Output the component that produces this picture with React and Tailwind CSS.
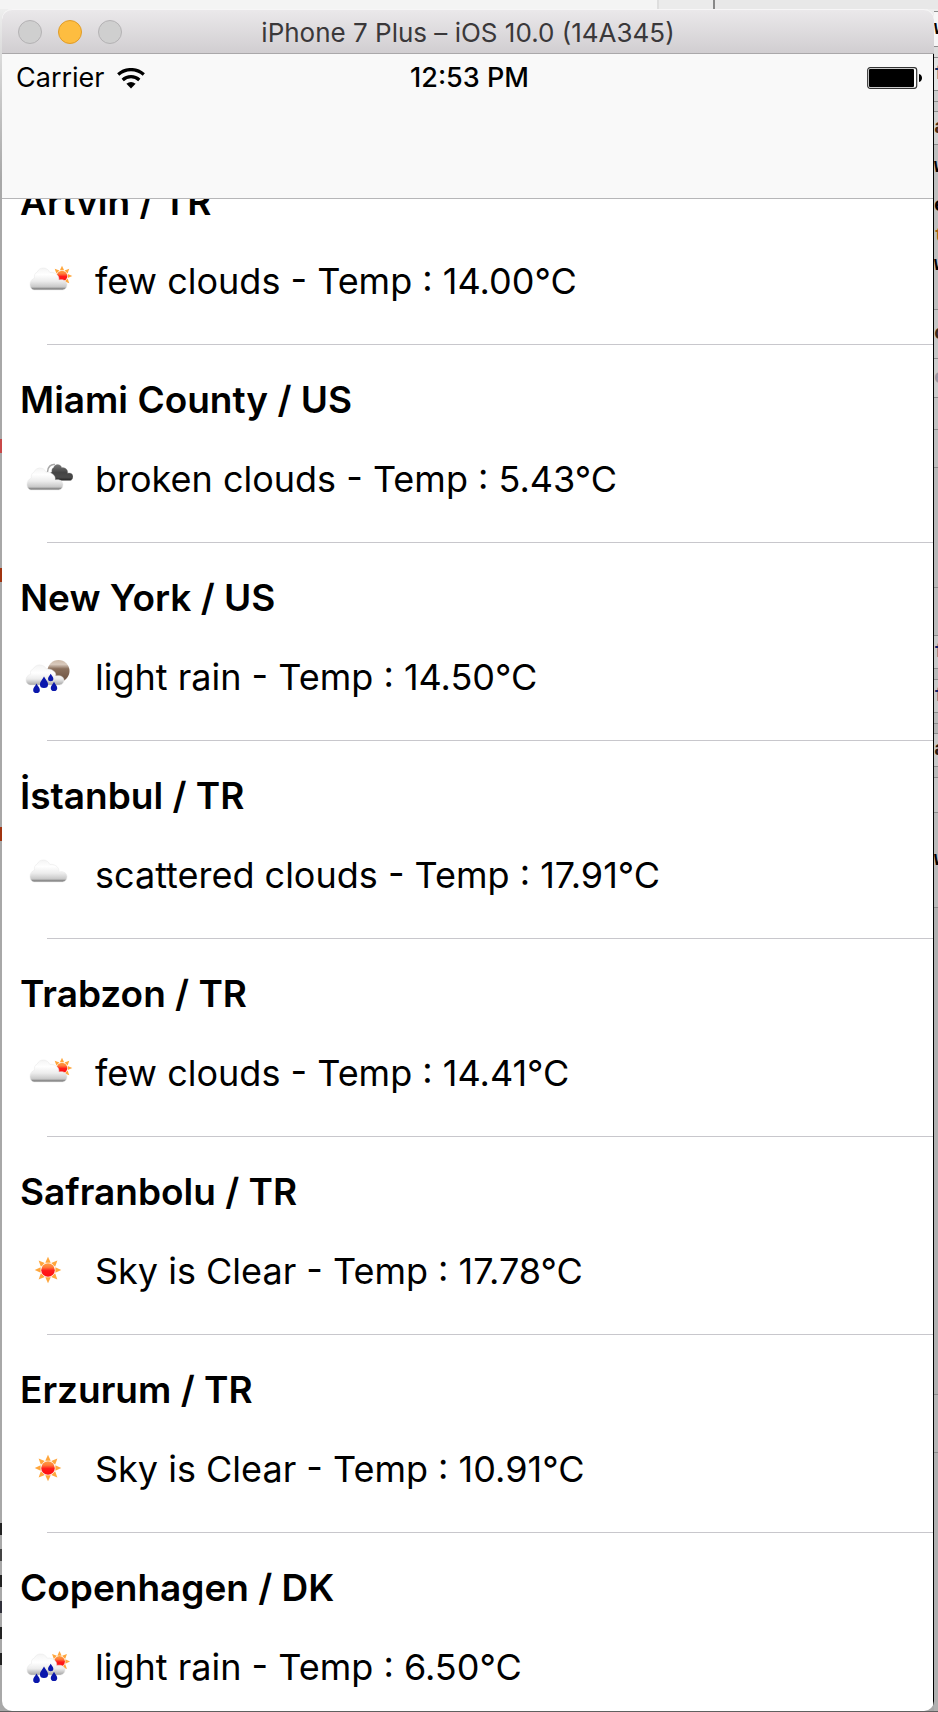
import React from "react";

const cities = [
  { name: "Artvin / TR", detail: "few clouds - Temp : 14.00°C", icon: "few" },
  { name: "Miami County / US", detail: "broken clouds - Temp : 5.43°C", icon: "broken" },
  { name: "New York / US", detail: "light rain - Temp : 14.50°C", icon: "rainNight" },
  { name: "İstanbul / TR", detail: "scattered clouds - Temp : 17.91°C", icon: "cloud" },
  { name: "Trabzon / TR", detail: "few clouds - Temp : 14.41°C", icon: "few" },
  { name: "Safranbolu / TR", detail: "Sky is Clear - Temp : 17.78°C", icon: "sun" },
  { name: "Erzurum / TR", detail: "Sky is Clear - Temp : 10.91°C", icon: "sun" },
  { name: "Copenhagen / DK", detail: "light rain - Temp : 6.50°C", icon: "rainDay" },
];

const rays = [0, 45, 90, 135, 180, 225, 270, 315];

function Gradients() {
  return (
    <svg width="0" height="0" className="absolute" aria-hidden="true">
      <defs>
        <linearGradient id="sunCore" x1="0" y1="0" x2="0" y2="1">
          <stop offset="0" stopColor="#ffa040" />
          <stop offset="0.3" stopColor="#ff7a38" />
          <stop offset="0.55" stopColor="#ff1a1a" />
          <stop offset="1" stopColor="#ff1010" />
        </linearGradient>
        <linearGradient id="cloudFill" x1="0" y1="0" x2="0" y2="1">
          <stop offset="0" stopColor="#f4f4f4" />
          <stop offset="0.3" stopColor="#ffffff" />
          <stop offset="0.6" stopColor="#ececec" />
          <stop offset="0.86" stopColor="#c8c8c8" />
          <stop offset="0.95" stopColor="#808080" />
          <stop offset="1" stopColor="#a0a0a0" />
        </linearGradient>
        <linearGradient id="rainCloud" x1="0" y1="0" x2="0" y2="1">
          <stop offset="0" stopColor="#f4f4f4" />
          <stop offset="0.4" stopColor="#ffffff" />
          <stop offset="0.7" stopColor="#ececec" />
          <stop offset="1" stopColor="#a4a4a4" />
        </linearGradient>
        <linearGradient id="darkCloud" x1="0" y1="0" x2="0" y2="1">
          <stop offset="0" stopColor="#777777" />
          <stop offset="0.5" stopColor="#444444" />
          <stop offset="0.8" stopColor="#4a4a4a" />
          <stop offset="1" stopColor="#222222" />
        </linearGradient>
        <linearGradient id="moonFill" x1="0" y1="0" x2="0" y2="1">
          <stop offset="0" stopColor="#cdb9a8" />
          <stop offset="0.2" stopColor="#d9cabd" />
          <stop offset="0.4" stopColor="#8a6f5c" />
          <stop offset="1" stopColor="#6b5140" />
        </linearGradient>
      </defs>
    </svg>
  );
}

function Sun({ cx, cy, r }) {
  return (
    <g>
      {rays.map((a) => (
        <path
          key={a}
          d={`M${cx - r * 0.4} ${cy - r * 1.08} L${cx} ${cy - r * 1.95} L${cx + r * 0.4} ${cy - r * 1.08} Z`}
          fill="#ffa63c"
          transform={`rotate(${a} ${cx} ${cy})`}
        />
      ))}
      <circle cx={cx} cy={cy} r={r} fill="url(#sunCore)" />
    </g>
  );
}

const cloudPath =
  "M4.500 22 C1.800 22 0 19.400 0 16.500 C0 13.500 1.800 10.900 4.500 10.200 C4 7.500 4.800 5 7 4.300 C8.200 1.600 10.600 0 13.200 0 C16.200 0 18.600 1.700 19.800 4.400 C23 3.800 27 5.600 28.300 8.300 C29 9.800 29 11 28.800 12 C34 10.800 37 13.400 37 16.600 C37 19.900 34.700 22 32.500 22 Z";

function Cloud({ x, y, w = 37, h = 22, fill = "url(#cloudFill)", stroke = "#e6e6e6" }) {
  return (
    <path
      d={cloudPath}
      transform={`translate(${x} ${y}) scale(${w / 37} ${h / 22})`}
      fill={fill}
      stroke={stroke}
      strokeWidth="0.5"
    />
  );
}

function Drop({ x, y, s = 1 }) {
  return (
    <path
      d="M0 -5.500 C1.200 -2.800 3.700 -1 3.700 1.600 A3.700 3.500 0 0 1 -3.700 1.600 C-3.700 -1 -1.200 -2.800 0 -5.500 Z"
      transform={`translate(${x} ${y}) scale(${s})`}
      fill="#0a17ac"
    />
  );
}

function Rain() {
  return (
    <g>
      <Drop x={13.5} y={37.5} s={0.9} />
      <Drop x={21} y={31.5} s={1.1} />
      <Drop x={27.7} y={26.6} s={0.72} />
      <Drop x={31} y={35.6} s={0.88} />
    </g>
  );
}

function WeatherIcon({ kind }) {
  return (
    <svg viewBox="0 0 50 50" className="size-[50px] shrink-0" aria-hidden="true">
      {kind === "sun" && <Sun cx={25} cy={25} r={6.8} />}
      {kind === "few" && (
        <>
          <Sun cx={39} cy={21} r={5.3} />
          <Cloud x={7} y={13} />
        </>
      )}
      {kind === "broken" && (
        <>
          <path d="M24.500 19 C24.500 14 28 10.800 32 11.500" fill="none" stroke="#a8a8a8" strokeWidth="1.500" />
          <Cloud x={26} y={11.5} w={24} h={16} fill="url(#darkCloud)" stroke="#8a8a8a" />
          <Cloud x={4} y={15} w={36} />
        </>
      )}
      {kind === "cloud" && <Cloud x={7} y={11} />}
      {kind === "rainNight" && (
        <>
          <circle cx="35.500" cy="20" r="11" fill="url(#moonFill)" />
          <Cloud x={3} y={14} w={38} h={20} fill="url(#rainCloud)" />
          <Rain />
        </>
      )}
      {kind === "rainDay" && (
        <>
          <Sun cx={36.5} cy={20.5} r={5.4} />
          <Cloud x={4} y={13} w={38} h={21} fill="url(#rainCloud)" />
          <Rain />
        </>
      )}
    </svg>
  );
}

function TitleBar() {
  return (
    <header className="relative flex h-[45px] items-center justify-center rounded-t-[10px] border-b border-[#aaa8aa] bg-linear-to-b from-[#ebe9eb] to-[#d1ced1] pt-1 shadow-[inset_0_1px_0_#f7f6f7]">
      <div className="absolute top-[11px] left-4 flex gap-4">
        <button aria-label="Close" className="size-6 rounded-full border border-[#b4b2b4] bg-[#cfcfcf]" />
        <button aria-label="Minimize" className="size-6 rounded-full border border-[#e09c28] bg-[#fdbd40]" />
        <button aria-label="Zoom" className="size-6 rounded-full border border-[#b4b2b4] bg-[#cfcfcf]" />
      </div>
      <h1 className="text-[26px] leading-8 text-[#3a383a]">iPhone 7 Plus – iOS 10.0 (14A345)</h1>
    </header>
  );
}

function StatusBar() {
  return (
    <div className="grid h-12 grid-cols-3 items-center pl-[14px] pr-[10px] text-[27px] leading-8">
      <div className="flex items-center gap-3">
        <span>Carrier</span>
        <svg viewBox="0 0 28 21" className="h-[21px] w-7" aria-hidden="true">
          <path d="M1.200 6.500 A19 19 0 0 1 26.800 6.500" fill="none" stroke="#000" strokeWidth="3.200" />
          <path d="M5.700 12 A12 12 0 0 1 22.300 12" fill="none" stroke="#000" strokeWidth="3.200" />
          <path d="M14 20.500 L9.400 15.800 Q14 12 18.600 15.800 Z" />
        </svg>
      </div>
      <span className="text-center font-medium">12:53 PM</span>
      <svg viewBox="0 0 56 22" className="h-[22px] w-14 justify-self-end" aria-hidden="true">
        <rect x="0.700" y="0.700" width="49" height="20.600" rx="2.500" fill="#fff" stroke="#333" strokeWidth="1.200" />
        <rect x="2" y="2" width="45" height="18" rx="1" />
        <path d="M52 7 C56 8 56 14 52 15 Z" />
      </svg>
    </div>
  );
}

function CityRow({ city }) {
  return (
    <li className="flex h-[198px] flex-col pt-8 leading-[46px]">
      <h2 className="pl-[18px] text-[37px] font-semibold">{city.name}</h2>
      <div className="mt-[30px] flex items-center gap-[22px] pl-[21px]">
        <WeatherIcon kind={city.icon} />
        <p className="pt-[2px] text-[36px]">{city.detail}</p>
      </div>
      <div className="mt-auto ml-[45px] h-px bg-[#c8c7cc]" />
    </li>
  );
}

const strip = [
  ["h-[1px]", "bg-[#e0e0e0]"],
  ["h-[35px]", "bg-[#f6f6f6]", "w", "text-black"],
  ["h-[11px]", "bg-[#dcdcdc]"],
  ["h-[33px]", "bg-[#e2e2e2]", "f", "text-[#10306a]"],
  ["h-[11px]", "bg-[#cccccc]"],
  ["h-[10px]", "bg-[#c8c8c8]"],
  ["h-[33px]", "bg-[#d0d0d0]", "a", "text-[#4a2a10]"],
  ["h-[44px]", "bg-[#bebebe] border-transparent", "w", "text-black"],
  ["h-[34px]", "bg-[#bebebe] border-transparent", "e", "text-black"],
  ["h-[27px]", "bg-[#bebebe] border-transparent", "t", "text-[#a86010]"],
  ["h-[30px]", "bg-[#bebebe] border-transparent", "w", "text-black"],
  ["h-[30px]", "bg-[#bebebe]"],
  ["h-[49px]", "bg-[#c6c6c6]", "c", "text-[#3a2a1a]"],
  ["h-[39px]", "bg-[#cccccc]", "e", "text-[#9a98a4]"],
  ["h-[32px]", "bg-[#c2c2c2]"],
  ["h-[38px]", "bg-[#bebebe]"],
  ["h-[120px]", "bg-[#b8b8b8]"],
  ["h-[48px]", "bg-[#bababa]"],
  ["h-[33px]", "bg-[#c8c8c8]", "f", "text-[#10206a]"],
  ["h-[11px]", "bg-[#bababa]"],
  ["h-[33px]", "bg-[#c8c8c8]", "f", "text-[#10206a]"],
  ["h-[11px]", "bg-[#bababa]"],
  ["h-[10px]", "bg-[#b4b4b4]"],
  ["h-[33px]", "bg-[#c8c8c8]", "a", "text-[#2a1a10]"],
  ["h-[11px]", "bg-[#bababa]"],
  ["h-[35px]", "bg-[#c4c4c4]"],
  ["h-[95px]", "bg-[#bababa]", "w", "text-black"],
  ["h-[487px]", "bg-[#b0b0b0]"],
  ["h-[58px]", "bg-[#b4b4b4]"],
  ["flex-1", "bg-[#b0b0b0] border-transparent"],
];

export default function App() {
  return (
    <div className="flex min-h-screen flex-col bg-[#a8a8a8] font-['Inter','Liberation_Sans',sans-serif] text-black">
      <Gradients />
      <div className="flex h-[9px] bg-[#ececec]" aria-hidden="true">
        <div className="w-[70%] bg-[#f4f4f4]" />
        <div className="w-[6%] border-l-2 border-[#dedede] bg-[#ebebeb]" />
        <div className="flex-1 border-l-2 border-[#888888] bg-[#e8e8e8]" />
      </div>
      <div className="flex flex-1 bg-linear-to-b from-[#eeeeee] to-[#a8a8a8] to-10%">
        <div className="flex w-[2px] flex-col" aria-hidden="true">
          <div className="h-[430px]" />
          <div className="h-[14px] bg-[#c84848]" />
          <div className="h-[115px]" />
          <div className="h-[14px] bg-[#a03410]" />
          <div className="h-[245px]" />
          <div className="h-[14px] bg-[#a03410]" />
          <div className="mt-auto mb-[46px] flex flex-col gap-[14px]">
            <div className="h-3 bg-[#222222]" />
            <div className="h-3 bg-[#444444]" />
            <div className="h-3 bg-[#222222]" />
            <div className="h-3 bg-[#30303a]" />
            <div className="h-3 bg-[#222222]" />
            <div className="h-3 bg-[#222222]" />
          </div>
        </div>
        <div className="flex min-w-0 flex-1 flex-col overflow-hidden rounded-[10px] bg-white">
          <TitleBar />
          <main className="flex flex-1 flex-col border-r border-black">
            <nav className="h-[145px] border-b border-[#b6b6b8] bg-[#f9f9f9]">
              <StatusBar />
            </nav>
            <div className="overflow-hidden">
              <ul className="-mt-[52px] -mb-5">
                {cities.map((c) => (
                  <CityRow key={c.name} city={c} />
                ))}
              </ul>
            </div>
          </main>
        </div>
        <div className="flex w-1 flex-col pt-[2px]" aria-hidden="true">
          {strip.map(([h, bg, letter, color], i) => (
            <div key={i} className={`${h} ${bg} flex items-center overflow-hidden border-b border-[#8c8c8c]`}>
              {letter && <span className={`${color} font-mono text-[20px] leading-5 font-bold`}>{letter}</span>}
            </div>
          ))}
        </div>
      </div>
      <div className="h-[2px] bg-[#606060]" aria-hidden="true" />
    </div>
  );
}
